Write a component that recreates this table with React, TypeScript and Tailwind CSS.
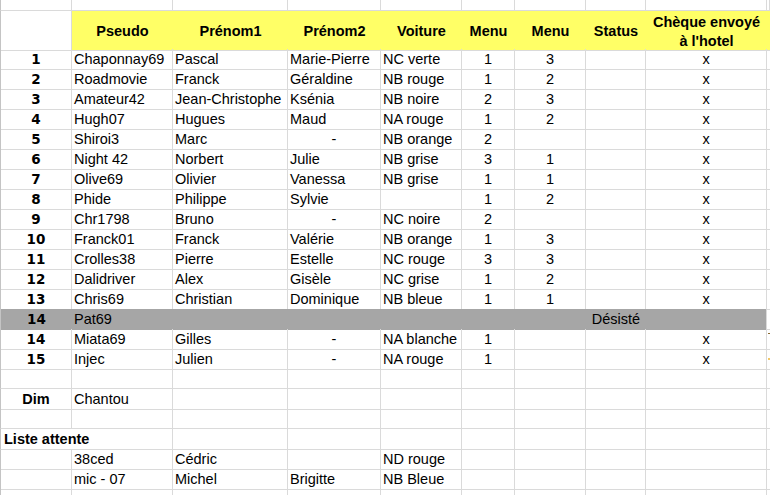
import React from "react";

type Row = {
  a?: string;
  cells: string[]; // B..I (8 cells)
  kind?: "data" | "gray" | "dim" | "liste" | "blank";
};

const GRID =
  "grid grid-cols-[72px_101px_115px_93px_81px_53px_71px_60px_121px_1fr]";

const rows: Row[] = [
  { a: "1", cells: ["Chaponnay69", "Pascal", "Marie-Pierre", "NC verte", "1", "3", "", "x"] },
  { a: "2", cells: ["Roadmovie", "Franck", "Géraldine", "NB rouge", "1", "2", "", "x"] },
  { a: "3", cells: ["Amateur42", "Jean-Christophe", "Ksénia", "NB noire", "2", "3", "", "x"] },
  { a: "4", cells: ["Hugh07", "Hugues", "Maud", "NA rouge", "1", "2", "", "x"] },
  { a: "5", cells: ["Shiroi3", "Marc", "-", "NB orange", "2", "", "", "x"] },
  { a: "6", cells: ["Night 42", "Norbert", "Julie", "NB grise", "3", "1", "", "x"] },
  { a: "7", cells: ["Olive69", "Olivier", "Vanessa", "NB grise", "1", "1", "", "x"] },
  { a: "8", cells: ["Phide", "Philippe", "Sylvie", "", "1", "2", "", "x"] },
  { a: "9", cells: ["Chr1798", "Bruno", "-", "NC noire", "2", "", "", "x"] },
  { a: "10", cells: ["Franck01", "Franck", "Valérie", "NB orange", "1", "3", "", "x"] },
  { a: "11", cells: ["Crolles38", "Pierre", "Estelle", "NC rouge", "3", "3", "", "x"] },
  { a: "12", cells: ["Dalidriver", "Alex", "Gisèle", "NC grise", "1", "2", "", "x"] },
  { a: "13", cells: ["Chris69", "Christian", "Dominique", "NB bleue", "1", "1", "", "x"] },
  { a: "14", cells: ["Pat69", "", "", "", "", "", "Désisté", ""], kind: "gray" },
  { a: "14", cells: ["Miata69", "Gilles", "-", "NA blanche", "1", "", "", "x"] },
  { a: "15", cells: ["Injec", "Julien", "-", "NA rouge", "1", "", "", "x"] },
  { cells: ["", "", "", "", "", "", "", ""], kind: "blank" },
  { a: "Dim", cells: ["Chantou", "", "", "", "", "", "", ""], kind: "dim" },
  { cells: ["", "", "", "", "", "", "", ""], kind: "blank" },
  { a: "Liste attente", cells: ["", "", "", "", "", "", "", ""], kind: "liste" },
  { cells: ["38ced", "Cédric", "", "ND rouge", "", "", "", ""], kind: "blank" },
  { cells: ["mic - 07", "Michel", "Brigitte", "NB Bleue", "", "", "", ""], kind: "blank" },
  { cells: ["", "", "", "", "", "", "", ""], kind: "blank" },
];

function alignFor(idx: number, text: string) {
  if (idx >= 4) return "justify-center";
  if (idx === 2 && text === "-") return "justify-center";
  return "justify-start pl-[2px]";
}

export default function App() {
  const line = "border-[#dadada]";
  return (
    <div className="w-[770px] h-[495px] overflow-hidden bg-white text-black font-['Liberation_Sans',Arial,sans-serif] text-[14.5px]">
      {/* top partial row */}
      <div className={`${GRID} h-[11px]`}>
        <div className={`border-l border-r border-b border-l-[#c4c4c4] ${line}`} />
        {Array.from({ length: 9 }).map((_, i) => (
          <div key={i} className={`border-r border-b ${line}`} />
        ))}
      </div>

      {/* header */}
      <div className={`${GRID} h-[38px] font-bold`}>
        <div className={`border-l border-r border-b border-l-[#c4c4c4] ${line}`} />
        {["Pseudo", "Prénom1", "Prénom2", "Voiture", "Menu", "Menu", "Status"].map((h, i) => (
          <div
            key={i}
            className={`bg-[#ffff66] border-b ${line} flex items-center justify-center pt-[1px] leading-[18.5px] whitespace-nowrap`}
          >
            {h}
          </div>
        ))}
        <div
          className={`bg-[#ffff66] border-b ${line} flex flex-col items-center justify-center pt-[2px] leading-[18.5px] text-center whitespace-nowrap`}
        >
          <span>Chèque envoyé</span>
          <span>à l'hotel</span>
        </div>
        <div className={`bg-[#ffff66] border-b ${line}`} />
      </div>

      {/* body rows */}
      {rows.map((r, ri) => {
        const gray = r.kind === "gray";
        return (
          <div key={ri} className={`${GRID} h-[20px] leading-[20px]`}>
            {/* column A */}
            {r.kind === "liste" ? (
              <div className={`relative z-10 border-l border-b border-l-[#c4c4c4] ${line} flex items-start pl-[3px] font-bold whitespace-nowrap overflow-visible`}>
                {r.a}
              </div>
            ) : (
              <div
                className={`border-l border-b border-l-[#c4c4c4] flex items-start justify-center font-bold ${
                  gray ? "bg-[#a6a6a6] border-b-[#a6a6a6]" : `border-r ${line}`
                } ${
                  r.kind === "dim"
                    ? ""
                    : "font-['DejaVu_Sans',Verdana,sans-serif] text-[13.5px]"
                }`}
              >
                {r.a}
              </div>
            )}
            {/* columns B..I */}
            {r.cells.map((c, ci) => {
              const isLast = ci === 7;
              let cls = "";
              if (gray) {
                cls = `bg-[#a6a6a6] border-b border-b-[#a6a6a6] ${isLast ? `border-r ${line}` : ""}`;
              } else {
                cls = `border-r border-b ${line}`;
              }
              return (
                <div
                  key={ci}
                  className={`${cls} flex items-start whitespace-nowrap overflow-visible ${alignFor(ci, c)}`}
                >
                  {c}
                </div>
              );
            })}
            {/* column J */}
            <div className={`relative border-b ${line}`}>
              {ri === 14 && (
                <span className="absolute left-[1px] top-[4px] w-[2px] h-[1px] bg-[#8a6a30]" />
              )}
              {ri === 15 && (
                <span className="absolute left-[1px] top-[9px] w-[2px] h-[2px] bg-[#f2c766]" />
              )}
            </div>
          </div>
        );
      })}
    </div>
  );
}
